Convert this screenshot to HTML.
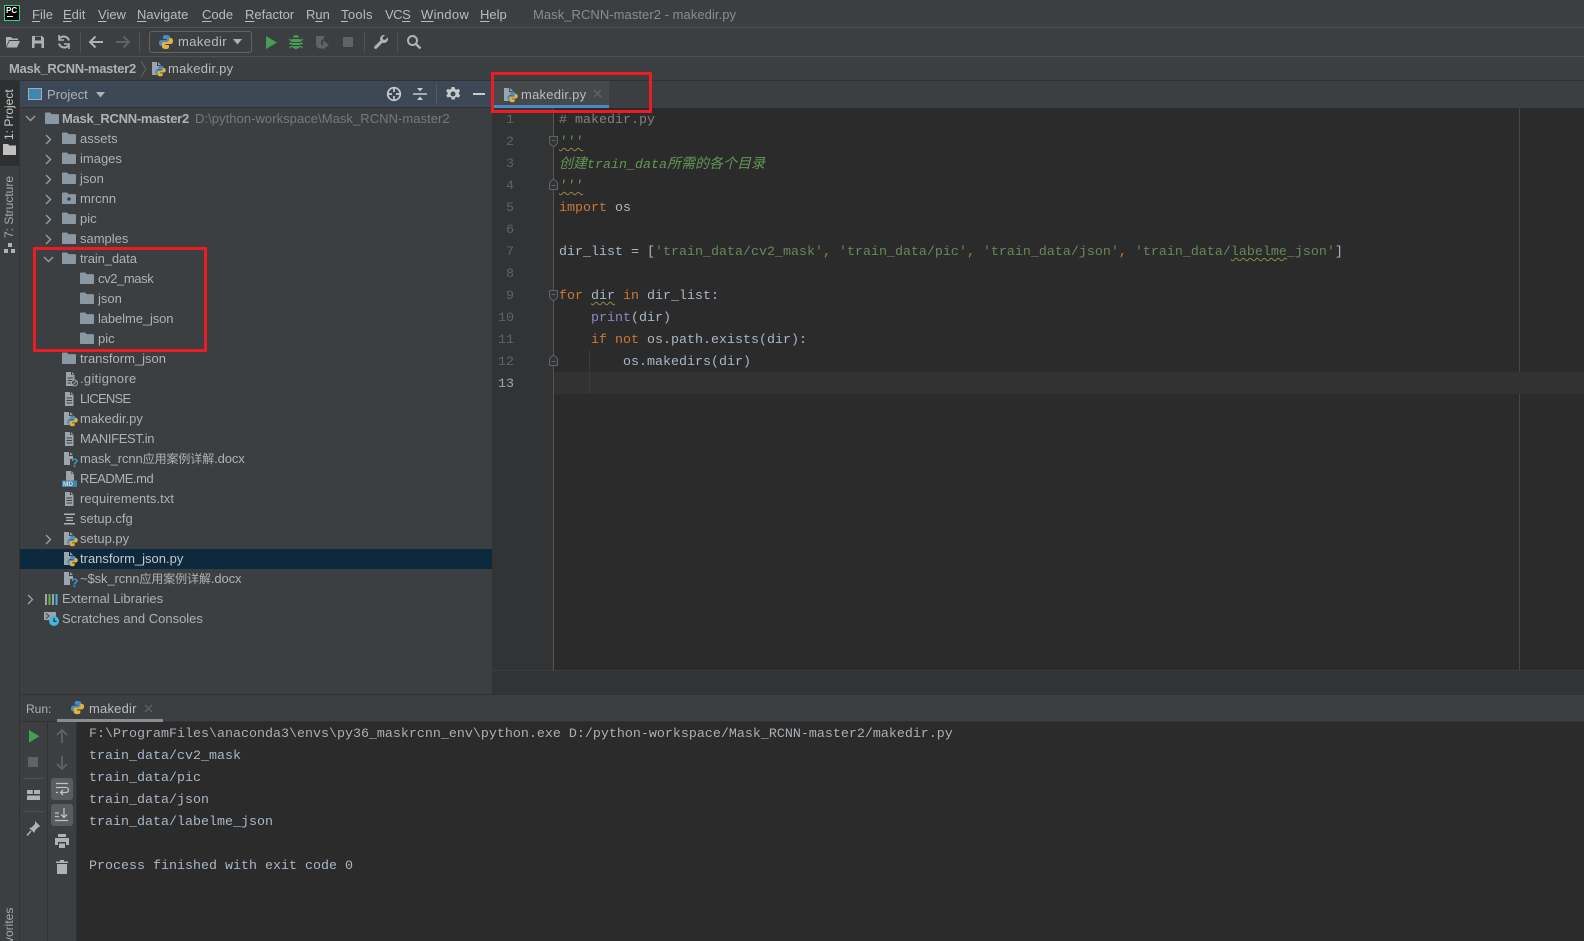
<!DOCTYPE html>
<html><head><meta charset="utf-8"><title>Mask_RCNN-master2 - makedir.py</title>
<style>
html{margin:0;padding:0;background:#3c3f41;width:1584px;height:941px;overflow:hidden}
body{margin:0;padding:0;background:#3c3f41;position:relative;width:1584px;height:941px;overflow:hidden;font-family:"Liberation Sans","Noto Sans CJK SC",sans-serif;font-size:13px;color:#bbb}
.a{position:absolute;white-space:pre}
.b{position:absolute}
.m{height:16px;line-height:16px;top:7px;color:#bbb}
.m u{text-decoration:underline;text-underline-offset:2px}
.t{height:20px;line-height:20px;color:#afb1b3}
.t i{font-style:normal;font-size:12px}
svg{position:absolute;overflow:visible}
.c{font-family:"Liberation Mono","Noto Sans CJK SC",monospace;font-size:13.33px;line-height:22px;height:22px;color:#a9b7c6;left:559px}
.c i.z{font-size:14px}
.n{font-family:"Liberation Mono",monospace;font-size:13.33px;line-height:22px;height:22px;color:#606366;width:30px;left:484px;text-align:right}
.o{font-family:"Liberation Mono",monospace;font-size:13.33px;line-height:22px;height:22px;color:#a9b7c6;left:89px}
.k{color:#cc7832}.s{color:#6a8759}.d{color:#629755;font-style:italic}.p{color:#8888c6}
.w{text-decoration:underline wavy #8f8a45;text-decoration-thickness:1px;text-underline-offset:2px}
.v{writing-mode:vertical-rl;transform:rotate(180deg);color:#bbb;font-size:12px;line-height:19px;width:19px;left:0}
</style></head><body>
<svg width="0" height="0" style="position:absolute">
<defs>
<symbol id="fold" viewBox="0 0 16 16"><path d="M1 3.500c0-.6.4-1 1-1h4.200l1.300 1.600H14c.6 0 1 .4 1 1V13c0 .6-.4 1-1 1H2c-.6 0-1-.4-1-1z" fill="#8a98a3"/></symbol>
<symbol id="pyb" viewBox="0 0 16 16"><path d="M8 1C5.500 1 5 2 5 3v2h3.500v1H3.500C2 6 1 7 1 9s1 3 2.500 3H5v-2c0-1 1-2 2.500-2h3c1 0 1.500-.5 1.500-1.500V3c0-1-1.500-2-4-2z" fill="#4a8cc2"/><path d="M8 15c2.500 0 3-1 3-2v-2H7.500v-1h5C14 10 15 9 15 7s-1-3-2.500-3H11v2c0 1-1 2-2.500 2h-3C4.500 8 4 8.500 4 9.500V13c0 1 1.500 2 4 2z" fill="#e3b23c"/></symbol>
<symbol id="fpy" viewBox="0 0 16 16"><path d="M1 1h5v4h4v3H6v6H1z M7 1l3 3H7z" fill="#9aa5ad"/><use href="#pyb" x="3" y="4" width="13" height="12"/></symbol>
<symbol id="ftx" viewBox="0 0 16 16"><path d="M3 1h5v3h3.500v11H3z M9 1l2.500 2.500H9z" fill="#9aa5ad"/><path d="M4.500 7h5.500M4.500 9.500h5.500M4.500 12h5.500" stroke="#3c3f41" stroke-width="1.100"/></symbol>
<symbol id="fqs" viewBox="0 0 16 16"><path d="M1 1h5v4h4v3H7v6H1z M7 1l3 3H7z" fill="#9aa5ad"/><text x="8" y="16" font-family="Liberation Sans" font-weight="bold" font-size="12" fill="#3d9ccf">?</text></symbol>
</defs></svg>

<!-- top rules -->
<div class="b" style="left:0;top:27px;width:1584px;height:1px;background:#515151"></div>
<div class="b" style="left:0;top:56px;width:1584px;height:1px;background:#515151"></div>
<div class="b" style="left:0;top:80px;width:1584px;height:1px;background:#323232"></div>

<!-- logo -->
<div class="b" style="left:4px;top:5px;width:14px;height:14px;background:#000;border:1px solid #21d789"></div>
<div class="a" style="left:6px;top:6px;font:bold 8px/9px 'Liberation Sans';color:#fff">PC</div>
<div class="b" style="left:7px;top:16px;width:6px;height:1px;background:#fff"></div>

<!-- menu -->
<div class="a m" style="left:32px"><u>F</u>ile</div>
<div class="a m" style="left:63px"><u>E</u>dit</div>
<div class="a m" style="left:98px"><u>V</u>iew</div>
<div class="a m" style="left:137px"><u>N</u>avigate</div>
<div class="a m" style="left:202px"><u>C</u>ode</div>
<div class="a m" style="left:245px"><u>R</u>efactor</div>
<div class="a m" style="left:306px">R<u>u</u>n</div>
<div class="a m" style="left:341px;letter-spacing:.3px"><u>T</u>ools</div>
<div class="a m" style="left:385px;letter-spacing:-.5px">VC<u>S</u></div>
<div class="a m" style="left:421px;letter-spacing:.3px"><u>W</u>indow</div>
<div class="a m" style="left:480px"><u>H</u>elp</div>
<div class="a m" style="left:533px;color:#8a8c8e;letter-spacing:.05px">Mask_RCNN-master2 - makedir.py</div>

<!-- toolbar -->
<svg style="left:5px;top:34px" width="16" height="16"><path d="M1 3h5l1.500 1.500H13V6H4L1 13z M4.500 7H15l-3 6.500H1.500z" fill="#afb1b3"/></svg>
<svg style="left:30px;top:34px" width="16" height="16"><path d="M2 2h10l2 2v10H2z" fill="#afb1b3"/><path d="M5 2.500h6v4H5zM4.500 9.500h7V14h-7z" fill="#3c3f41"/></svg>
<svg style="left:56px;top:34px" width="16" height="16" fill="none" stroke="#afb1b3" stroke-width="2"><path d="M13 6.500A5.500 5.500 0 0 0 3.500 4.500M3 9.500a5.500 5.500 0 0 0 9.500 2"/><path d="M3 1v5h5M13 15v-5H8" stroke-width="1.600"/></svg>
<div class="b" style="left:80px;top:32px;width:1px;height:20px;background:#515151"></div>
<svg style="left:88px;top:34px" width="16" height="16" fill="none" stroke="#afb1b3" stroke-width="2"><path d="M2 8h13M7.500 2.500 2 8l5.500 5.500"/></svg>
<svg style="left:115px;top:34px" width="16" height="16" fill="none" stroke="#5f6365" stroke-width="2"><path d="M1 8h13M8.500 2.500 14 8l-5.500 5.500"/></svg>
<div class="b" style="left:139px;top:32px;width:1px;height:20px;background:#515151"></div>
<div class="b" style="left:149px;top:31px;width:101px;height:20px;border:1px solid #646464;border-radius:3px"></div>
<svg style="left:158px;top:34px" width="16" height="16"><use href="#pyb"/></svg>
<div class="a" style="left:178px;top:34px;line-height:16px;letter-spacing:.4px;color:#bbb">makedir</div>
<svg style="left:233px;top:39px" width="10" height="6"><path d="M0 0h9L4.500 5.500z" fill="#afb1b3"/></svg>
<svg style="left:263px;top:34px" width="16" height="16"><path d="M3 2l11 6.500L3 15z" fill="#499c54"/></svg>
<svg style="left:288px;top:34px" width="16" height="16"><path d="M5 3.500a3 2.500 0 0 1 6 0zM3.500 5h9v5a4.500 5 0 0 1-9 0z" fill="#499c54"/><path d="M1 5l2.500 2M15 5l-2.500 2M1 9.500h2.500M15 9.500h-2.500M1.500 14l2.500-2M14.500 14 12 12" stroke="#499c54" stroke-width="1.200"/><path d="M4 8.500h8M4 11.500h8" stroke="#3c3f41"/></svg>
<svg style="left:314px;top:34px" width="16" height="16"><path d="M2 2h8v2.500L7 7v3l3 3v1.500H6A4 4 0 0 1 2 10.500z" fill="#5f6365"/><path d="M9 6.500l6 4.500-6 4.500z" fill="#5f6365"/></svg>
<div class="b" style="left:343px;top:37px;width:10px;height:10px;background:#5f6365"></div>
<div class="b" style="left:364px;top:32px;width:1px;height:20px;background:#515151"></div>
<svg style="left:373px;top:34px" width="16" height="16"><path d="M15 4.500a4 4 0 0 1-5.500 4.200L3.800 14.500a1.500 1.500 0 0 1-2.200-2.200l5.800-5.800A4 4 0 0 1 12 1l-2.500 2.500.5 2 2 .5L14.500 3.500q.5.500.5 1z" fill="#afb1b3"/></svg>
<div class="b" style="left:397px;top:32px;width:1px;height:20px;background:#515151"></div>
<svg style="left:406px;top:34px" width="16" height="16" fill="none" stroke="#afb1b3" stroke-width="2"><circle cx="6.500" cy="6.500" r="4.500"/><path d="M10 10l4.500 4.500" stroke-width="2.400"/></svg>

<!-- breadcrumbs -->
<div class="a" style="left:9px;top:60px;line-height:17px;font-weight:bold;color:#afb1b3;letter-spacing:-.27px">Mask_RCNN-master2</div>
<svg style="left:140px;top:61px" width="7" height="16" fill="none" stroke="#5f6365"><path d="M1 0l5 8-5 8"/></svg>
<svg style="left:151px;top:61px" width="16" height="16"><use href="#fpy"/></svg>
<div class="a" style="left:168px;top:60px;line-height:17px;color:#bbb;letter-spacing:.25px">makedir.py</div>

<!-- left strip -->
<div class="b" style="left:19px;top:81px;width:1px;height:860px;background:#323232"></div>
<div class="b" style="left:0;top:81px;width:19px;height:85px;background:#2d2f30"></div>
<div class="a v" style="top:90px;height:50px;color:#c8c8c8">1: Project</div>
<svg style="left:3px;top:143px" width="13" height="12"><path d="M0 1h5l1.500 1.500H13V12H0z" fill="#c0c0c0"/></svg>
<div class="a v" style="top:176px;height:62px;color:#a8a8a8">7: Structure</div>
<svg style="left:4px;top:243px" width="11" height="10"><path d="M4 0h4v4H4zM0 6h4v4H0zM7 6h4v4H7z" fill="#afb1b3"/></svg>
<div class="a v" style="top:897px;height:60px;color:#a8a8a8">Favorites</div>

<!-- project header -->
<div class="b" style="left:20px;top:81px;width:472px;height:26px;background:#3c4856"></div>
<div class="b" style="left:20px;top:107px;width:472px;height:1px;background:#323232"></div>
<div class="b" style="left:28px;top:88px;width:12px;height:10px;background:#3f86b0;border:1px solid #a5adb3"></div>
<div class="a" style="left:47px;top:87px;line-height:16px;letter-spacing:.05px;color:#afb1b3">Project</div>
<svg style="left:96px;top:92px" width="9" height="6"><path d="M0 0h9L4.500 5.500z" fill="#afb1b3"/></svg>
<svg style="left:386px;top:86px" width="16" height="16" fill="none" stroke="#c8cacc" stroke-width="1.700"><circle cx="8" cy="8" r="6.300"/><path d="M8 1v5M8 10v5M1 8h5M10 8h5"/></svg>
<svg style="left:412px;top:86px" width="16" height="16"><path d="M1 7.200h14v1.600H1zM5 2h6L8 5.500zM5 14h6l-3-3.500z" fill="#c8cacc"/></svg>
<div class="b" style="left:436px;top:84px;width:1px;height:20px;background:#515b66"></div>
<svg style="left:445px;top:86px" width="16" height="16"><path d="M6.500 1h3l.4 2 1.700.8 1.800-1 1.700 2.200-1.400 1.500.2 1.500 1.400 1.500-1.700 2.200-1.800-1-1.700.8-.4 2h-3l-.4-2-1.700-.8-1.800 1L1.300 9.500l1.400-1.500-.2-1.500L1.100 5l1.700-2.200 1.800 1 1.500-.8zM8 5.500a2.500 2.500 0 1 0 0 5 2.500 2.500 0 0 0 0-5z" fill="#c8cacc" fill-rule="evenodd"/></svg>
<div class="b" style="left:473px;top:93px;width:12px;height:2px;background:#c8cacc"></div>

<!-- tree -->
<div class="b" style="left:20px;top:549px;width:472px;height:20px;background:#0d293e"></div>
<svg style="left:25px;top:113px" width="11" height="11" fill="none" stroke="#9a9c9e" stroke-width="1.400"><path d="M1 3l4.500 4.500L10 3"/></svg>
<svg style="left:44px;top:110px" width="16" height="16"><use href="#fold"/></svg>
<div class="a t" style="left:62px;top:109px"><b style="letter-spacing:-.27px">Mask_RCNN-master2</b></div>
<div class="a t" style="left:195px;top:109px;color:#787878;letter-spacing:.05px">D:\python-workspace\Mask_RCNN-master2</div>

<svg style="left:43px;top:134px" width="10" height="11" fill="none" stroke="#9a9c9e" stroke-width="1.400"><path d="M3 1l4.500 4.500L3 10"/></svg>
<svg style="left:61px;top:130px" width="16" height="16"><use href="#fold"/></svg>
<div class="a t" style="left:80px;top:129px">assets</div>
<svg style="left:43px;top:154px" width="10" height="11" fill="none" stroke="#9a9c9e" stroke-width="1.400"><path d="M3 1l4.500 4.500L3 10"/></svg>
<svg style="left:61px;top:150px" width="16" height="16"><use href="#fold"/></svg>
<div class="a t" style="left:80px;top:149px">images</div>
<svg style="left:43px;top:174px" width="10" height="11" fill="none" stroke="#9a9c9e" stroke-width="1.400"><path d="M3 1l4.500 4.500L3 10"/></svg>
<svg style="left:61px;top:170px" width="16" height="16"><use href="#fold"/></svg>
<div class="a t" style="left:80px;top:169px">json</div>
<svg style="left:43px;top:194px" width="10" height="11" fill="none" stroke="#9a9c9e" stroke-width="1.400"><path d="M3 1l4.500 4.500L3 10"/></svg>
<svg style="left:61px;top:190px" width="16" height="16"><use href="#fold"/><circle cx="8" cy="9" r="1.700" fill="#3c3f41"/></svg>
<div class="a t" style="left:80px;top:189px">mrcnn</div>
<svg style="left:43px;top:214px" width="10" height="11" fill="none" stroke="#9a9c9e" stroke-width="1.400"><path d="M3 1l4.500 4.500L3 10"/></svg>
<svg style="left:61px;top:210px" width="16" height="16"><use href="#fold"/></svg>
<div class="a t" style="left:80px;top:209px">pic</div>
<svg style="left:43px;top:234px" width="10" height="11" fill="none" stroke="#9a9c9e" stroke-width="1.400"><path d="M3 1l4.500 4.500L3 10"/></svg>
<svg style="left:61px;top:230px" width="16" height="16"><use href="#fold"/></svg>
<div class="a t" style="left:80px;top:229px">samples</div>
<svg style="left:43px;top:254px" width="11" height="11" fill="none" stroke="#9a9c9e" stroke-width="1.400"><path d="M1 3l4.500 4.500L10 3"/></svg>
<svg style="left:61px;top:250px" width="16" height="16"><use href="#fold"/></svg>
<div class="a t" style="left:80px;top:249px;letter-spacing:-.1px">train_data</div>
<svg style="left:79px;top:270px" width="16" height="16"><use href="#fold"/></svg>
<div class="a t" style="left:98px;top:269px;letter-spacing:-.4px">cv2_mask</div>
<svg style="left:79px;top:290px" width="16" height="16"><use href="#fold"/></svg>
<div class="a t" style="left:98px;top:289px">json</div>
<svg style="left:79px;top:310px" width="16" height="16"><use href="#fold"/></svg>
<div class="a t" style="left:98px;top:309px;letter-spacing:-.1px">labelme_json</div>
<svg style="left:79px;top:330px" width="16" height="16"><use href="#fold"/></svg>
<div class="a t" style="left:98px;top:329px">pic</div>
<svg style="left:61px;top:350px" width="16" height="16"><use href="#fold"/></svg>
<div class="a t" style="left:80px;top:349px">transform_json</div>
<svg style="left:63px;top:371px" width="16" height="16"><use href="#ftx"/><circle cx="11.500" cy="12" r="3" fill="#3c3f41" stroke="#9aa5ad" stroke-width="1"/><path d="M9.500 14l4-4" stroke="#9aa5ad"/></svg>
<div class="a t" style="left:80px;top:369px;letter-spacing:.3px">.gitignore</div>
<svg style="left:62px;top:391px" width="16" height="16"><use href="#ftx"/></svg>
<div class="a t" style="left:80px;top:389px;letter-spacing:-.75px">LICENSE</div>
<svg style="left:63px;top:411px" width="16" height="16"><use href="#fpy"/></svg>
<div class="a t" style="left:80px;top:409px">makedir.py</div>
<svg style="left:62px;top:431px" width="16" height="16"><use href="#ftx"/></svg>
<div class="a t" style="left:80px;top:429px;letter-spacing:-.35px">MANIFEST.in</div>
<svg style="left:63px;top:451px" width="16" height="16"><use href="#fqs"/></svg>
<div class="a t" style="left:80px;top:449px;letter-spacing:-.1px">mask_rcnn<i>应用案例详解</i>.docx</div>
<svg style="left:62px;top:471px" width="16" height="16"><path d="M4 0h5v3h3v7H4zM9.500 0 12 2.500H9.500z" fill="#9aa5ad"/><rect y="9.500" width="15" height="6.500" fill="#3d87ab"/><text x="1" y="15" font-family="Liberation Sans" font-weight="bold" font-size="6.500" fill="#ddd">MD</text></svg>
<div class="a t" style="left:80px;top:469px;letter-spacing:-.45px">README.md</div>
<svg style="left:62px;top:491px" width="16" height="16"><use href="#ftx"/></svg>
<div class="a t" style="left:80px;top:489px;letter-spacing:.05px">requirements.txt</div>
<svg style="left:62px;top:511px" width="16" height="16"><path d="M2 2.500h11v1.500H2zM4 6h7v1.200H4zM4 8.800h7V10H4zM2 12h11v1.500H2z" fill="#afb1b3"/></svg>
<div class="a t" style="left:80px;top:509px">setup.cfg</div>
<svg style="left:43px;top:534px" width="10" height="11" fill="none" stroke="#9a9c9e" stroke-width="1.400"><path d="M3 1l4.500 4.500L3 10"/></svg>
<svg style="left:63px;top:531px" width="16" height="16"><use href="#fpy"/></svg>
<div class="a t" style="left:80px;top:529px">setup.py</div>
<svg style="left:63px;top:551px" width="16" height="16"><use href="#fpy"/></svg>
<div class="a t" style="left:80px;top:549px;color:#c6c8ca">transform_json.py</div>
<svg style="left:63px;top:571px" width="16" height="16"><use href="#fqs"/></svg>
<div class="a t" style="left:80px;top:569px;letter-spacing:-.1px">~$sk_rcnn<i>应用案例详解</i>.docx</div>
<svg style="left:25px;top:594px" width="10" height="11" fill="none" stroke="#9a9c9e" stroke-width="1.400"><path d="M3 1l4.500 4.500L3 10"/></svg>
<svg style="left:44px;top:591px" width="16" height="16"><path d="M1 3h2v11H1z" fill="#9aa5ad"/><path d="M4.500 3h2v11h-2z" fill="#62b543"/><path d="M8 3h2v11H8z" fill="#9aa5ad"/><path d="M11.500 3h2v11h-2z" fill="#40b6e0"/></svg>
<div class="a t" style="left:62px;top:589px">External Libraries</div>
<svg style="left:44px;top:611px" width="16" height="16"><path d="M0 1h12v8H0z" fill="#9aa5ad"/><path d="M2 2.500 5 5l-3 2.500" fill="none" stroke="#3c3f41"/><circle cx="10" cy="10" r="5" fill="#40b6e0"/><path d="M10 7v3.300h2.500" fill="none" stroke="#2b2b2b" stroke-width="1.200"/></svg>
<div class="a t" style="left:62px;top:609px">Scratches and Consoles</div>

<!-- red box tree -->
<div class="b" style="left:33px;top:247px;width:168px;height:99px;border:3px solid #ed1c24"></div>

<!-- tab -->
<div class="b" style="left:494px;top:81px;width:115px;height:24px;background:#45494b"></div>
<div class="b" style="left:494px;top:105px;width:115px;height:3px;background:#4a88c7"></div>
<svg style="left:503px;top:87px" width="16" height="16"><use href="#fpy"/></svg>
<div class="a" style="left:521px;top:87px;line-height:16px;color:#bbb;letter-spacing:.25px">makedir.py</div>
<svg style="left:593px;top:89px" width="9" height="9" stroke="#63676a" stroke-width="1.200"><path d="M1 1l7 7M8 1l-7 7"/></svg>

<!-- editor -->
<div class="b" style="left:492px;top:108px;width:62px;height:562px;background:#313335"></div>
<div class="b" style="left:554px;top:108px;width:1030px;height:562px;background:#2b2b2b"></div>
<div class="b" style="left:553px;top:108px;width:1px;height:562px;background:#555"></div>
<div class="b" style="left:1519px;top:108px;width:1px;height:562px;background:#454545"></div>
<div class="b" style="left:554px;top:372px;width:1030px;height:22px;background:#323232"></div>
<div class="b" style="left:589px;top:350px;width:1px;height:44px;background:#3b3b3b"></div>
<div class="b" style="left:492px;top:670px;width:1092px;height:1px;background:#3a3c3d"></div>
<div class="b" style="left:492px;top:671px;width:1092px;height:24px;background:#313335"></div>
<div class="a n" style="top:110px">1</div>
<div class="a n" style="top:132px">2</div>
<div class="a n" style="top:154px">3</div>
<div class="a n" style="top:176px">4</div>
<div class="a n" style="top:198px">5</div>
<div class="a n" style="top:220px">6</div>
<div class="a n" style="top:242px">7</div>
<div class="a n" style="top:264px">8</div>
<div class="a n" style="top:286px">9</div>
<div class="a n" style="top:308px">10</div>
<div class="a n" style="top:330px">11</div>
<div class="a n" style="top:352px">12</div>
<div class="a n" style="top:374px;color:#a4a3a3">13</div>
<svg style="left:549px;top:136px" width="9" height="12" fill="#313335" stroke="#606366"><path d="M.5.500h8v7l-4 3.500-4-3.500z"/><path d="M2.500 4.500h4"/></svg>
<svg style="left:549px;top:178px" width="9" height="12" fill="#313335" stroke="#606366"><path d="M.5 11.500h8v-7l-4-3.500-4 3.500z"/><path d="M2.500 7.500h4"/></svg>
<svg style="left:549px;top:290px" width="9" height="12" fill="#313335" stroke="#606366"><path d="M.5.500h8v7l-4 3.500-4-3.500z"/><path d="M2.500 4.500h4"/></svg>
<svg style="left:549px;top:354px" width="9" height="12" fill="#313335" stroke="#606366"><path d="M.5 11.500h8v-7l-4-3.500-4 3.500z"/><path d="M2.500 7.500h4"/></svg>
<div class="a c" style="top:110px;color:#808080"># makedir.py</div>
<div class="a c" style="top:132px"><span class="d w">'''</span></div>
<div class="a c" style="top:154px"><span class="d"><i class="z">创建</i>train_data<i class="z">所需的各个目录</i></span></div>
<div class="a c" style="top:176px"><span class="d w">'''</span></div>
<div class="a c" style="top:198px"><span class="k">import</span> os</div>
<div class="a c" style="top:242px">dir_list = [<span class="s">'train_data/cv2_mask'</span><span style="color:#cc7832">,</span> <span class="s">'train_data/pic'</span><span style="color:#cc7832">,</span> <span class="s">'train_data/json'</span><span style="color:#cc7832">,</span> <span class="s">'train_data/<span class="w">labelme</span>_json'</span>]</div>
<div class="a c" style="top:286px"><span class="k">for</span> <span class="w">dir</span> <span class="k">in</span> dir_list:</div>
<div class="a c" style="top:308px">    <span class="p">print</span>(dir)</div>
<div class="a c" style="top:330px">    <span class="k">if not</span> os.path.exists(dir):</div>
<div class="a c" style="top:352px">        os.makedirs(dir)</div>

<!-- red box tab -->
<div class="b" style="left:491px;top:72px;width:155px;height:35px;border:3px solid #ed1c24"></div>

<!-- run panel -->
<div class="b" style="left:20px;top:694px;width:1564px;height:1px;background:#323232"></div>
<div class="b" style="left:20px;top:721px;width:1564px;height:1px;background:#323232"></div>
<div class="a" style="left:26px;top:701px;line-height:16px;font-size:12px;color:#afb1b3">Run:</div>
<svg style="left:70px;top:700px" width="15" height="15"><use href="#pyb" width="15" height="15"/></svg>
<div class="a" style="left:89px;top:701px;line-height:16px;color:#bbb;letter-spacing:.2px">makedir</div>
<svg style="left:144px;top:704px" width="9" height="9" stroke="#63676a" stroke-width="1.200"><path d="M1 1l7 7M8 1l-7 7"/></svg>
<div class="b" style="left:57px;top:719px;width:106px;height:3px;background:#8a8d8f"></div>
<div class="b" style="left:77px;top:722px;width:1507px;height:219px;background:#2b2b2b"></div>
<div class="b" style="left:47px;top:722px;width:1px;height:219px;background:#323232"></div>
<div class="b" style="left:76px;top:722px;width:1px;height:219px;background:#323232"></div>
<svg style="left:29px;top:730px" width="11" height="13"><path d="M0 0l10.500 6.300L0 12.600z" fill="#499c54"/></svg>
<div class="b" style="left:28px;top:757px;width:10px;height:10px;background:#5f6365"></div>
<div class="b" style="left:23px;top:778px;width:20px;height:1px;background:#515151"></div>
<svg style="left:27px;top:790px" width="13" height="10"><path d="M0 0h5.800v4H0zM7 0h6v4H7zM0 5.500h13V10H0z" fill="#afb1b3"/></svg>
<div class="b" style="left:23px;top:811px;width:20px;height:1px;background:#515151"></div>
<svg style="left:26px;top:821px" width="15" height="15"><path d="M9 0l5.500 5.500-2 .5-3.500 3.500-.5 2.500L3 7l2.500-.5L9 3z" fill="#afb1b3"/><path d="M5 10l-4 4.500" stroke="#afb1b3" stroke-width="1.500"/></svg>
<svg style="left:56px;top:729px" width="12" height="14" fill="none" stroke="#5f6365" stroke-width="1.800"><path d="M6 14V1M1 6l5-5 5 5"/></svg>
<svg style="left:56px;top:756px" width="12" height="14" fill="none" stroke="#5f6365" stroke-width="1.800"><path d="M6 0v13M1 8l5 5 5-5"/></svg>
<div class="b" style="left:51px;top:778px;width:22px;height:22px;background:#5a5d5f;border-radius:3px"></div>
<svg style="left:55px;top:782px" width="14" height="14" fill="none" stroke="#bfc1c3" stroke-width="1.300"><path d="M1 1.500h12M1 5.500h10a2.500 2.500 0 0 1 0 5H6M1 10.500h2"/><path d="M8 8l-2.500 2.500L8 13"/></svg>
<div class="b" style="left:51px;top:804px;width:22px;height:22px;background:#5a5d5f;border-radius:3px"></div>
<svg style="left:55px;top:808px" width="14" height="14" fill="none" stroke="#bfc1c3" stroke-width="1.300"><path d="M0 5h4M0 8.500h4M0 12.500h13M9 0v9M6 6.500l3 3 3-3"/></svg>
<svg style="left:55px;top:834px" width="14" height="14"><path d="M3 0h8v3H3zM0 4h14v7h-3V8H3v3H0zM4 9.500h6V14H4z" fill="#afb1b3"/></svg>
<svg style="left:56px;top:860px" width="12" height="14"><path d="M4 0h4v1.500h4V3H0V1.500h4zM1 4h10v10H1z" fill="#afb1b3"/></svg>
<div class="a o" style="top:724px;color:#a9b0b6">F:\ProgramFiles\anaconda3\envs\py36_maskrcnn_env\python.exe D:/python-workspace/Mask_RCNN-master2/makedir.py</div>
<div class="a o" style="top:746px">train_data/cv2_mask</div>
<div class="a o" style="top:768px">train_data/pic</div>
<div class="a o" style="top:790px">train_data/json</div>
<div class="a o" style="top:812px">train_data/labelme_json</div>
<div class="a o" style="top:856px">Process finished with exit code 0</div>
</body></html>
